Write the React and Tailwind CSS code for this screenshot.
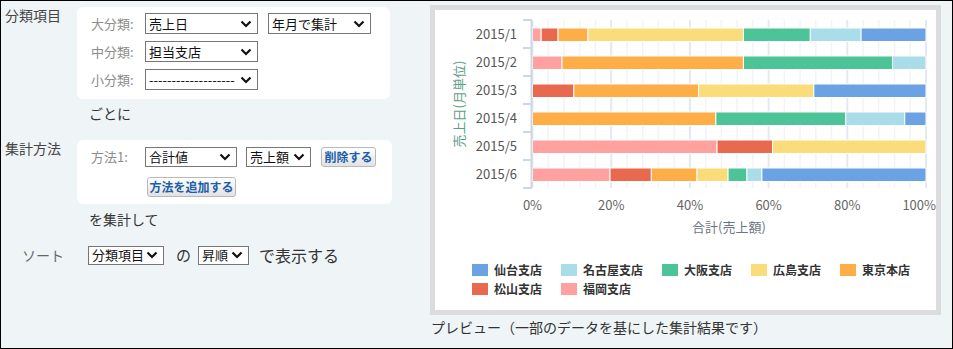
import React from 'react';

const COLORS = {
    fukuoka: '#ffa19f',
    matsuyama: '#e9694f',
    tokyo: '#ffad46',
    hiroshima: '#fbdc7a',
    osaka: '#4cc497',
    nagoya: '#a8dde9',
    sendai: '#6aa2e3',
};

// percent boundaries of each stacked segment, left to right
const rows = [
    { label: '2015/1', segs: [['fukuoka', 0, 2.2], ['matsuyama', 2.2, 6.5], ['tokyo', 6.5, 14.1], ['hiroshima', 14.1, 53.6], ['osaka', 53.6, 70.6], ['nagoya', 70.6, 83.5], ['sendai', 83.5, 100]] },
    { label: '2015/2', segs: [['fukuoka', 0, 7.5], ['tokyo', 7.5, 53.6], ['osaka', 53.6, 91.5], ['nagoya', 91.5, 100]] },
    { label: '2015/3', segs: [['matsuyama', 0, 10.5], ['tokyo', 10.5, 42.2], ['hiroshima', 42.2, 71.5], ['sendai', 71.5, 100]] },
    { label: '2015/4', segs: [['tokyo', 0, 46.6], ['osaka', 46.6, 79.6], ['nagoya', 79.6, 94.6], ['sendai', 94.6, 100]] },
    { label: '2015/5', segs: [['fukuoka', 0, 46.9], ['matsuyama', 46.9, 61.0], ['hiroshima', 61.0, 100]] },
    { label: '2015/6', segs: [['fukuoka', 0, 19.7], ['matsuyama', 19.7, 30.2], ['tokyo', 30.2, 41.8], ['hiroshima', 41.8, 49.7], ['osaka', 49.7, 54.5], ['nagoya', 54.5, 58.3], ['sendai', 58.3, 100]] },
];

const legend = [
    { key: 'sendai', name: '仙台支店', x: 37, y: 254 },
    { key: 'nagoya', name: '名古屋支店', x: 126, y: 254 },
    { key: 'osaka', name: '大阪支店', x: 227, y: 254 },
    { key: 'hiroshima', name: '広島支店', x: 316, y: 254 },
    { key: 'tokyo', name: '東京本店', x: 405, y: 254 },
    { key: 'matsuyama', name: '松山支店', x: 37, y: 273 },
    { key: 'fukuoka', name: '福岡支店', x: 126, y: 273 },
];

const X0 = 97.5;
const PW = 393.5;
const TOP = 10;
const BAND = 28;

const Chevron = () => (
    <svg width="12" height="8" viewBox="0 0 12 8" className="shrink-0">
        <polyline points="1.5,1.5 6,6 10.5,1.5" fill="none" stroke="#111" strokeWidth="2.2" />
    </svg>
);

const FakeSelect = ({ value, w, h = 'h-[21px]', text = 'text-[13px]' }) => (
    <div className={`${w} ${h} ${text} flex items-center justify-between border border-[#767676] bg-white pl-[3px] pr-[5px] text-[#111] leading-[18px]`}>
        <span className="whitespace-nowrap">{value}</span>
        <Chevron />
    </div>
);

const Btn = ({ children, w }) => (
    <div className={`${w} h-[20px] flex items-center justify-center rounded-[3px] border border-[#b9b9b9] bg-linear-to-b from-white to-[#e2e2e2] text-[12px] leading-[18px] font-bold text-[#1b5ea9]`}>
        {children}
    </div>
);

const Chart = () => {
    const grid = [];
    for (let i = 0; i <= 25; i++) {
        const x = X0 + (PW * i) / 25;
        const major = i % 5 === 0;
        grid.push(
            <line key={i} x1={x} x2={x} y1={TOP} y2={TOP + BAND * 6} stroke={major ? '#e4e9f1' : '#f1f3f7'} strokeWidth={major ? 2 : 1.5} />
        );
    }
    return (
        <svg width="501" height="300" style={{ fontFamily: '"Noto Sans CJK JP", "Noto Sans", sans-serif' }}>
            <defs>
                <linearGradient id="ytitle" x1="0" y1="0" x2="0" y2="1">
                    <stop offset="0" stopColor="#7590a8" />
                    <stop offset="1" stopColor="#4fa866" />
                </linearGradient>
            </defs>
            {grid}
            {rows.map((r, i) => {
                const y = TOP + BAND * i + 8;
                return (
                    <g key={r.label}>
                        {r.segs.map(([k, a, b]) => (
                            <rect key={k} x={X0 + (PW * a) / 100} y={y} width={(PW * (b - a)) / 100} height="13.5" fill={COLORS[k]} stroke="#fff" strokeWidth="1" />
                        ))}
                        <text x="82" y={TOP + BAND * i + 19} textAnchor="end" fontSize="13" fill="#555">{r.label}</text>
                    </g>
                );
            })}
            <line x1="96.5" x2="96.5" y1={TOP} y2={TOP + BAND * 6} stroke="#ccd6eb" strokeWidth="2" />
            {[0, 1, 2, 3, 4, 5, 6].map((k) => (
                <line key={k} x1="88" x2="97" y1={TOP + BAND * k} y2={TOP + BAND * k} stroke="#ccd6eb" strokeWidth="2" />
            ))}
            <text transform="translate(29 94) rotate(-90)" textAnchor="middle" fontSize="13" fill="url(#ytitle)">売上日(月単位)</text>
            {[0, 20, 40, 60, 80].map((p) => (
                <text key={p} x={X0 + (PW * p) / 100} y="200" textAnchor="middle" fontSize="13" fill="#666">{p}%</text>
            ))}
            <text x="501" y="200" textAnchor="end" fontSize="13" fill="#666">100%</text>
            <text x="294" y="222" textAnchor="middle" fontSize="13" fill="#6b7588">合計(売上額)</text>
            {legend.map((l) => (
                <g key={l.key}>
                    <rect x={l.x} y={l.y} width="16" height="12" fill={COLORS[l.key]} />
                    <text x={l.x + 22} y={l.y + 11} fontSize="12" fontWeight="bold" fill="#333">{l.name}</text>
                </g>
            ))}
        </svg>
    );
};

const App = () => {
    return (
        <div
            className="w-[953px] h-[349px] border border-black bg-[#eff4f7] flex text-[#333] overflow-hidden"
            style={{ fontFamily: '"Noto Sans CJK JP", "Noto Sans", sans-serif' }}
        >
            {/* left: settings */}
            <div className="w-[429px] shrink-0">
                <div className="flex mt-[4px]">
                    <div className="w-[76px] pl-[4px] text-[14px] leading-[20px] text-[#444]">分類項目</div>
                    <div className="mt-[2px] w-[313px] rounded-[6px] bg-white pt-[6px] pb-[9px] pl-[14px] flex flex-col gap-[7px]">
                        <div className="flex items-center">
                            <div className="w-[54px] text-[13px] text-[#8c8c8c]">大分類:</div>
                            <FakeSelect value="売上日" w="w-[113px]" />
                            <div className="ml-[10px]">
                                <FakeSelect value="年月で集計" w="w-[103px]" />
                            </div>
                        </div>
                        <div className="flex items-center">
                            <div className="w-[54px] text-[13px] text-[#8c8c8c]">中分類:</div>
                            <FakeSelect value="担当支店" w="w-[113px]" />
                        </div>
                        <div className="flex items-center">
                            <div className="w-[54px] text-[13px] text-[#8c8c8c]">小分類:</div>
                            <FakeSelect value="-------------------" w="w-[113px]" />
                        </div>
                    </div>
                </div>
                <div className="pl-[88px] mt-[4px] text-[14px] leading-[20px]">ごとに</div>

                <div className="flex mt-[15px]">
                    <div className="w-[76px] pl-[4px] text-[14px] leading-[20px] text-[#444]">集計方法</div>
                    <div className="mt-[2px] w-[315px] rounded-[6px] bg-white pt-[7px] pb-[7px] pl-[14px] flex flex-col gap-[10px]">
                        <div className="flex items-center">
                            <div className="w-[54px] text-[13px] text-[#8c8c8c]">方法1:</div>
                            <FakeSelect value="合計値" w="w-[92px]" h="h-[20px]" />
                            <div className="ml-[9px]">
                                <FakeSelect value="売上額" w="w-[65px]" h="h-[20px]" />
                            </div>
                            <div className="ml-[10px]">
                                <Btn w="w-[55px]">削除する</Btn>
                            </div>
                        </div>
                        <div className="pl-[2px]">
                            <div className="ml-[54px]">
                                <Btn w="w-[89px]">方法を追加する</Btn>
                            </div>
                        </div>
                    </div>
                </div>
                <div className="pl-[88px] mt-[5px] text-[14px] leading-[20px]">を集計して</div>

                <div className="flex items-center mt-[16px] h-[20px]">
                    <div className="w-[87px] pl-[21px] text-[14px] text-[#666]">ソート</div>
                    <FakeSelect value="分類項目" w="w-[76px]" h="h-[19px]" />
                    <span className="ml-[12px] text-[15px]">の</span>
                    <div className="ml-[7px]">
                        <FakeSelect value="昇順" w="w-[51px]" h="h-[19px]" />
                    </div>
                    <span className="ml-[10px] text-[16px]">で表示する</span>
                </div>
            </div>

            {/* right: preview */}
            <div className="pt-[4px]">
                <div className="w-[511px] h-[310px] border-[5px] border-[#dcdcdc] bg-white">
                    <Chart />
                </div>
                <div className="mt-[2px] pl-[1px] text-[14px] leading-[20px] text-[#333]">プレビュー（一部のデータを基にした集計結果です）</div>
            </div>
        </div>
    );
};

export default App;
